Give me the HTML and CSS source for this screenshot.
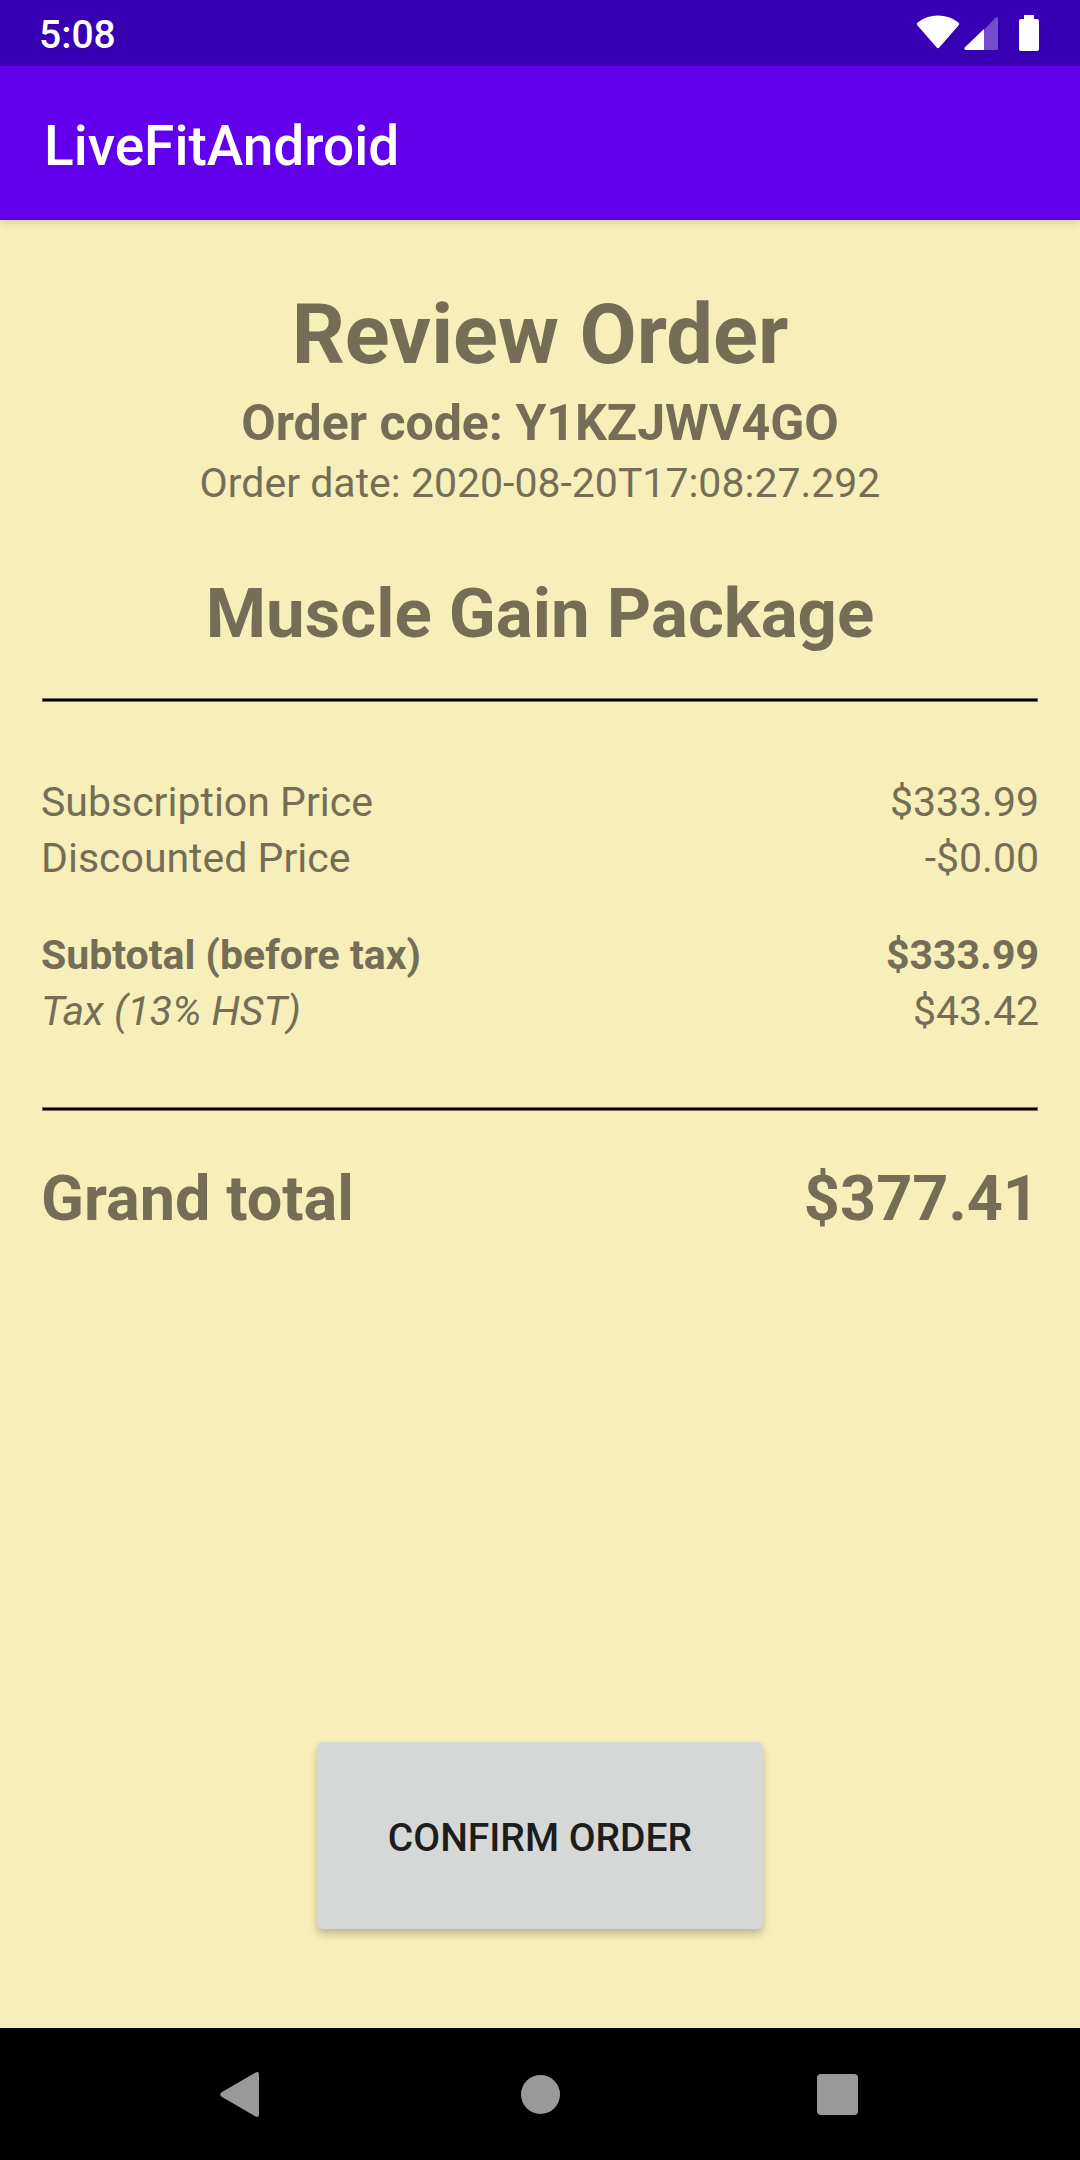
FILE: index.html
```html
<!DOCTYPE html>
<html lang="en">
<head>
  <meta charset="utf-8">
  <meta name="viewport" content="width=device-width, initial-scale=1">
  <title>LiveFitAndroid</title>
  <link rel="stylesheet" href="styles.css">
</head>
<body>
  <div class="status-bar">
    <time class="clock">5:08</time>
    <div class="status-icons">
      <svg class="icon-wifi" viewBox="0 0 44 36" aria-hidden="true">
        <path fill="#fff" d="M1.300 10.200Q0 8.600 1.600 7.400Q10.500 .600 22 .600T42.400 7.400Q44 8.600 42.700 10.200L23.300 32.400Q22 34 20.700 32.400Z"/>
      </svg>
      <svg class="icon-signal" viewBox="0 0 34 36" aria-hidden="true">
        <path fill="#fff" fill-opacity=".3" d="M20 14.700L31 3.200Q33.600 1 34 3.400V33.500Q34 35 32.500 35H20Z"/>
        <path fill="#fff" d="M20 14V35H2Q-.8 34.400 1 32.300Z"/>
      </svg>
      <svg class="icon-battery" viewBox="0 0 20 36" aria-hidden="true">
        <path fill="#fff" d="M5 0H15V4H18Q20 4 20 6V34Q20 36 18 36H2Q0 36 0 34V6Q0 4 2 4H5Z"/>
      </svg>
    </div>
  </div>

  <header class="app-bar">
    <h1 class="app-title">LiveFitAndroid</h1>
  </header>

  <main class="order">
    <h2 class="order-heading">Review Order</h2>
    <p class="order-code">Order code: Y1KZJWV4GO</p>
    <p class="order-date">Order date: 2020-08-20T17:08:27.292</p>
    <h3 class="package">Muscle Gain Package</h3>

    <hr class="rule">

    <table class="prices">
      <tbody>
        <tr><th scope="row">Subscription Price</th><td>$333.99</td></tr>
        <tr><th scope="row">Discounted Price</th><td>-$0.00</td></tr>
      </tbody>
      <tbody>
        <tr class="subtotal"><th scope="row">Subtotal (before tax)</th><td>$333.99</td></tr>
        <tr class="tax"><th scope="row">Tax (13% HST)</th><td>$43.42</td></tr>
      </tbody>
    </table>

    <hr class="rule">

    <p class="grand-total"><span>Grand total</span><span>$377.41</span></p>

    <button class="confirm" type="button">CONFIRM ORDER</button>
  </main>

  <nav class="nav-bar" aria-label="System">
    <button class="nav-button" type="button" aria-label="Back">
      <svg viewBox="0 0 48 48" aria-hidden="true"><path fill="#999" d="M3.200 22.600L37.600 2.400Q41 1.200 41 4.400V44.600Q41 47.800 37.600 46.600L3.200 26.400Q1.400 24.500 3.200 22.600Z"/></svg>
    </button>
    <button class="nav-button" type="button" aria-label="Home">
      <svg viewBox="0 0 48 48" aria-hidden="true"><circle fill="#999" cx="24.500" cy="24.500" r="19.500"/></svg>
    </button>
    <button class="nav-button" type="button" aria-label="Recent apps">
      <svg viewBox="0 0 48 48" aria-hidden="true"><rect fill="#999" x="3" y="4" width="41" height="41" rx="4"/></svg>
    </button>
  </nav>
</body>
</html>
```
FILE: styles.css
```css
* {
  box-sizing: border-box;
}

body {
  margin: 0;
  min-height: 100vh;
  display: flex;
  flex-direction: column;
  background: #f7efb9;
  color: #736e55;
  font-family: Roboto, "Noto Sans", sans-serif;
  font-size: 41px;
  line-height: 56px;
}

h1, h2, h3, p {
  margin: 0;
}

button {
  border: 0;
  font-family: inherit;
}

.status-bar {
  height: 66px;
  padding: 0 41px 0 39px;
  display: flex;
  align-items: center;
  justify-content: space-between;
  position: relative;
  z-index: 1;
  background: #3700b3;
  color: #fff;
}

.clock {
  padding-top: 4px;
  font-size: 39px;
  font-weight: 500;
}

.status-icons {
  display: flex;
  align-items: center;
}

.status-icons svg {
  display: block;
  height: 36px;
}

.icon-wifi {
  width: 44px;
  margin-right: 4px;
}

.icon-signal {
  width: 34px;
  margin-right: 21px;
}

.icon-battery {
  width: 20px;
}

.app-bar {
  height: 154px;
  padding: 6px 44px 0;
  display: flex;
  align-items: center;
  position: relative;
  background: #6200ee;
  color: #fff;
  box-shadow: 0 2px 10px rgba(0, 0, 0, 0.14);
}

.app-title {
  font-size: 55px;
  line-height: 64px;
  font-weight: 500;
}

.order {
  flex: 1;
  padding: 63px 41px 99px;
  display: flex;
  flex-direction: column;
  text-align: center;
}

.order-heading {
  margin-bottom: 4px;
  font-size: 83px;
  line-height: 104px;
  font-weight: 700;
}

.order-code {
  font-size: 50px;
  line-height: 64px;
  font-weight: 700;
}

.package {
  margin: 61px 0 42px;
  font-size: 69px;
  line-height: 84px;
  font-weight: 700;
}

.rule {
  width: auto;
  height: 4px;
  margin: 0 1px;
  border: 1px solid #736e55;
  background: #000;
}

.prices {
  margin: 72px 0 68px;
  border-collapse: collapse;
}

.prices th,
.prices td {
  padding: 0;
  font-weight: 400;
}

.prices th {
  text-align: left;
}

.prices td {
  text-align: right;
}

.prices .subtotal th,
.prices .subtotal td {
  padding-top: 41px;
  font-weight: 700;
}

.prices .tax th {
  font-style: italic;
}

.grand-total {
  margin: 50px 0;
  display: flex;
  justify-content: space-between;
  font-size: 63px;
  line-height: 76px;
  font-weight: 700;
}

.confirm {
  align-self: center;
  margin-top: auto;
  padding: 68px 71px 63px;
  border-radius: 6px;
  background: #d6d8d7;
  color: #1d1d1d;
  font-size: 39px;
  line-height: 56px;
  font-weight: 500;
  box-shadow: 0 5px 9px rgba(0, 0, 0, 0.24);
}

.nav-bar {
  height: 132px;
  padding: 0 93px;
  display: grid;
  grid-template-columns: repeat(3, 1fr);
  background: #000;
}

.nav-button {
  padding: 0;
  display: flex;
  align-items: center;
  justify-content: center;
  background: none;
}

.nav-button svg {
  display: block;
  width: 48px;
  height: 48px;
}
```
